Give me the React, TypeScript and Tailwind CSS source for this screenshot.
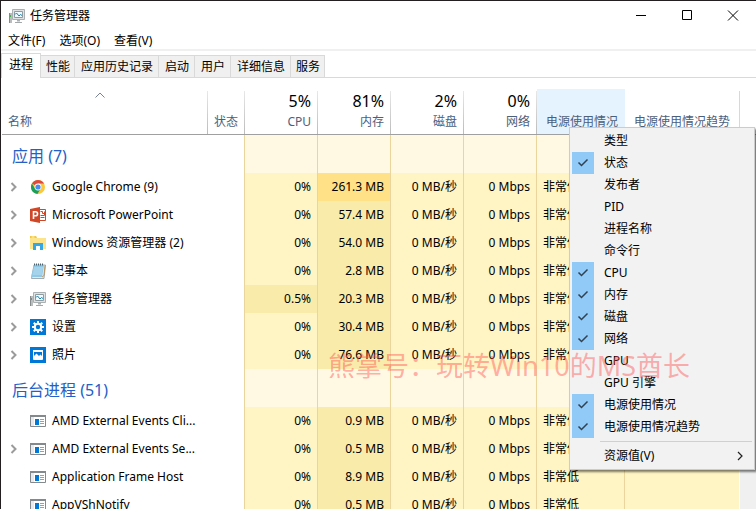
import { useState, type ReactNode } from "react";

const TaskManagerIcon = () => (
  <svg width="16" height="16" viewBox="0 0 16 16" aria-hidden="true">
    <path d="M0 5h3v10H0z" fill="#b9bdbd" />
    <path d="M0 5h1v10H0z" fill="#858b8b" />
    <path d="M1 7h1v2H1z" fill="#3fb24d" />
    <path d="M3.500 1.500h12v10h-12z" fill="#dfe3e4" stroke="#aab0b2" />
    <path d="M5.500 3.500h8v6h-8z" fill="#eefaff" stroke="#8f9a9f" />
    <path d="M6 6.500l1.500-1.500L10 8l1.500-1.500 1.500 1" fill="none" stroke="#1483b5" />
    <path d="M8 12h3v1.500H8z" fill="#aab0b1" />
    <path d="M6 14.500h7" stroke="#a3a9aa" />
  </svg>
);

const ChromeIcon = () => (
  <svg width="16" height="16" viewBox="0 0 16 16" aria-hidden="true">
    <circle cx="8" cy="8" r="7" fill="#fbc93b" />
    <path d="M8 8L1.900 4.500A7 7 0 0 1 14.100 4.600H8z" fill="#dd4b3e" />
    <path d="M1.900 4.500A7 7 0 0 0 7.400 15L10.800 9.600 8 8 5 9.600z" fill="#1b9e5a" />
    <circle cx="8" cy="8" r="3.400" fill="#fff" />
    <circle cx="8" cy="8" r="2.600" fill="#4a8af0" />
  </svg>
);

const PowerPointIcon = () => (
  <svg width="16" height="16" viewBox="0 0 16 16" aria-hidden="true">
    <path d="M9 2.500h6.500v11H9z" fill="#fff" stroke="#d04727" />
    <path d="M10.500 4.500h2v2h2M14.500 4.500v4h-4M10.500 10.500h4" fill="none" stroke="#d04727" />
    <path d="M0 2l10-2v16L0 14z" fill="#d04727" />
    <path d="M3.500 12V4.700h2a2 2 0 0 1 0 4.100h-2" fill="none" stroke="#fff" strokeWidth="1.600" />
  </svg>
);

const ExplorerIcon = () => (
  <svg width="16" height="16" viewBox="0 0 16 16" aria-hidden="true">
    <path d="M0 1h6l1 2h9v11H0z" fill="#fbe48c" />
    <path d="M0 1h6l1 2H0z" fill="#f4c83c" />
    <path d="M1.500 2h3" stroke="#fff5c8" />
    <path d="M3 8h10v7h-3v-4H6v4H3z" fill="#35a7e4" />
    <path d="M6 11h4v4H6z" fill="#fff" />
  </svg>
);

const NotepadIcon = () => (
  <svg width="16" height="16" viewBox="0 0 16 16" aria-hidden="true">
    <path d="M4 2h11.500l-1.500 13.500H1.500z" fill="#dfe9ee" stroke="#8d9ba3" strokeWidth=".8" />
    <path d="M4 2h10l-2 12H1z" fill="#8fc9e6" />
    <path d="M4 5h9M3.500 7h9M3.200 9h9M2.800 11h9" stroke="#c5e5f5" strokeWidth=".8" />
    <path d="M12 14l2-1.500 1-10" fill="none" stroke="#b58b4e" strokeWidth=".8" />
    <path d="M4.500.5v2M6.500.5v2M8.500.5v2M10.500.5v2M12.500.5v2" stroke="#4d6470" />
  </svg>
);

const SettingsIcon = () => (
  <svg width="16" height="16" viewBox="0 0 16 16" aria-hidden="true">
    <path d="M0 0h16v16H0z" fill="#0078d7" />
    <path
      d="M8 2v12M2 8h12M3.750 3.750l8.500 8.500M12.250 3.750l-8.500 8.500"
      stroke="#fff"
      strokeWidth="2"
    />
    <circle cx="8" cy="8" r="3.200" fill="#0078d7" stroke="#fff" strokeWidth="2" />
  </svg>
);

const PhotosIcon = () => (
  <svg width="16" height="16" viewBox="0 0 16 16" aria-hidden="true">
    <path d="M0 0h16v16H0z" fill="#0078d7" />
    <path d="M3.500 3.500h9v9h-9z" fill="none" stroke="#fff" />
    <path d="M3 3h10v2H3z" fill="#fff" />
    <path d="M4 12V9l2.500-2.500L9 9l1.500-1.500L12 9v3z" fill="#fff" />
  </svg>
);

const GenericIcon = () => (
  <svg width="16" height="16" viewBox="0 0 16 16" aria-hidden="true">
    <path d="M.5 2.500h15v11H.5z" fill="#fff" stroke="#84898d" />
    <path d="M0 2h16v2H0z" fill="#84898d" />
    <path d="M1 4h3v9H1z" fill="#e8eaeb" />
    <path d="M5 6h4v6H5z" fill="#0078d7" />
    <path d="M10 6.500h4M10 8.500h4M10 10.500h4" stroke="#9a9fa3" />
  </svg>
);

type Process = {
  name: string;
  icon: () => ReactNode;
  memory: string;
  cpu?: string;
  expandable?: boolean;
  heavy?: boolean;
};

const groups: { title: string; rows: Process[] }[] = [
  {
    title: "应用 (7)",
    rows: [
      { name: "Google Chrome (9)", icon: ChromeIcon, memory: "261.3 MB", expandable: true, heavy: true },
      { name: "Microsoft PowerPoint", icon: PowerPointIcon, memory: "57.4 MB", expandable: true },
      { name: "Windows 资源管理器 (2)", icon: ExplorerIcon, memory: "54.0 MB", expandable: true },
      { name: "记事本", icon: NotepadIcon, memory: "2.8 MB", expandable: true },
      { name: "任务管理器", icon: TaskManagerIcon, memory: "20.3 MB", cpu: "0.5%", expandable: true },
      { name: "设置", icon: SettingsIcon, memory: "30.4 MB", expandable: true },
      { name: "照片", icon: PhotosIcon, memory: "76.6 MB", expandable: true },
    ],
  },
  {
    title: "后台进程 (51)",
    rows: [
      { name: "AMD External Events Cli...", icon: GenericIcon, memory: "0.9 MB" },
      { name: "AMD External Events Se...", icon: GenericIcon, memory: "0.5 MB", expandable: true },
      { name: "Application Frame Host", icon: GenericIcon, memory: "8.9 MB" },
      { name: "AppVShNotify", icon: GenericIcon, memory: "0.5 MB" },
    ],
  },
];

const tabs = [
  { label: "性能", pad: "pl-[5px] pr-1" },
  { label: "应用历史记录", pad: "pl-1.5 pr-[5px]" },
  { label: "启动", pad: "pl-1.5 pr-[5px]" },
  { label: "用户", pad: "pl-1.5 pr-[5px]" },
  { label: "详细信息", pad: "pl-1.5 pr-[5px]" },
  { label: "服务", pad: "pl-[5px] pr-1" },
];

const columnOptions: [string, boolean][] = [
  ["类型", false],
  ["状态", true],
  ["发布者", false],
  ["PID", false],
  ["进程名称", false],
  ["命令行", false],
  ["CPU", true],
  ["内存", true],
  ["磁盘", true],
  ["网络", true],
  ["GPU", false],
  ["GPU 引擎", false],
  ["电源使用情况", true],
  ["电源使用情况趋势", true],
];

function Header({ label, total, line = true }: { label: string; total?: string; line?: boolean }) {
  return (
    <div className="flex h-[43px] items-stretch">
      <div className="flex flex-1 flex-col items-end justify-end pr-1.5 pb-0.5">
        {total && <span className="text-base leading-[22px] text-black">{total}</span>}
        <span className="leading-5">{label}</span>
      </div>
      <span className={line ? "w-px bg-linear-to-b from-[#e8e8e8] to-[#bcbcbc]" : "w-px"} />
    </div>
  );
}

function TitleBar() {
  return (
    <header className="flex h-[30px] items-center pl-2">
      <TaskManagerIcon />
      <h1 className="flex-1 pl-[5px]">任务管理器</h1>
      <button type="button" aria-label="最小化" className="grid h-full w-[46px] place-items-center">
        <svg width="12" height="12" viewBox="0 0 12 12" stroke="#000"><path d="M1 5.500h10" /></svg>
      </button>
      <button type="button" aria-label="最大化" className="grid h-full w-[46px] place-items-center">
        <svg width="12" height="12" viewBox="0 0 12 12" stroke="#000" fill="none"><path d="M1.500.5h9v9h-9z" /></svg>
      </button>
      <button type="button" aria-label="关闭" className="grid h-full w-[46px] place-items-center">
        <svg width="12" height="12" viewBox="0 0 12 12" stroke="#000"><path d="M1 .5l10 10M11 .5l-10 10" /></svg>
      </button>
    </header>
  );
}

function ProcessRow({ row }: { row: Process }) {
  const Icon = row.icon;
  const cell = "border-r border-[#ead69c] bg-[#fff4c4] pr-1.5 text-right whitespace-nowrap";
  return (
    <tr className="h-7">
      <td>
        <div className="flex h-7 items-center pl-2">
          <span className="w-5">
            {row.expandable && (
              <button type="button" aria-label="展开" className="block">
                <svg width="8" height="10" viewBox="0 0 8 10" fill="none" stroke="#9b9b9b" strokeWidth="2">
                  <path d="M1.500 1l4 4-4 4" />
                </svg>
              </button>
            )}
          </span>
          <Icon />
          <span className="pl-1.5 whitespace-nowrap">{row.name}</span>
        </div>
      </td>
      <td className="border-r border-[#ead69c]" />
      <td className={row.cpu ? "border-r border-[#ead69c] bg-[#f9ecaa] pr-1.5 text-right" : cell}>{row.cpu ?? "0%"}</td>
      <td
        className={
          row.heavy
            ? "border-r border-[#ead69c] bg-[#ffe187] pr-1.5 text-right whitespace-nowrap"
            : "border-r border-[#ead69c] bg-[#f9ecaa] pr-1.5 text-right whitespace-nowrap"
        }
      >
        {row.memory}
      </td>
      <td className={cell}>0 MB/秒</td>
      <td className={cell}>0 Mbps</td>
      <td className="border-r border-[#ead69c] bg-[#fff4c4] pl-1.5 whitespace-nowrap">非常低</td>
      <td className="border-r border-white bg-[#fff4c4]" />
      <td className="bg-[#f0f0f0]" />
    </tr>
  );
}

function GroupRow({ title }: { title: string }) {
  const cell = "border-r border-[#ead69c] bg-[#fff9e4]";
  return (
    <tr className="h-[38px]">
      <th scope="rowgroup" className="pt-1 pl-2.5 text-left text-base font-normal whitespace-nowrap text-[#2560c8]">
        {title}
      </th>
      <td className="border-r border-[#ead69c]" />
      <td className={cell} />
      <td className={cell} />
      <td className={cell} />
      <td className={cell} />
      <td className={cell} />
      <td className="border-r border-white bg-[#fff9e4]" />
      <td className="bg-[#f0f0f0]" />
    </tr>
  );
}

function ProcessTable() {
  const th = "border-b border-[#a0a0a0] p-0 align-bottom font-normal";
  return (
    <table className="w-full table-fixed border-separate border-spacing-0">
      <colgroup>
        <col className="w-[206px]" />
        <col className="w-[37px]" />
        <col className="w-[73px]" />
        <col className="w-[73px]" />
        <col className="w-[73px]" />
        <col className="w-[73px]" />
        <col className="w-[88px]" />
        <col />
        <col className="w-4" />
      </colgroup>
      <thead className="text-[#4c607a]">
        <tr className="h-[46px]">
          <th className={th}>
            <div className="flex h-[43px]">
              <div className="flex flex-1 flex-col items-start justify-between pr-4 pb-0.5 pl-1.5">
                <svg className="self-center" width="10" height="8" viewBox="0 0 10 8" fill="none" stroke="#77809c">
                  <path d="M.5 6.500L5 2l4.500 4.500" />
                </svg>
                <span className="leading-5">名称</span>
              </div>
              <span className="w-px bg-linear-to-b from-[#e8e8e8] to-[#bcbcbc]" />
            </div>
          </th>
          <th className={th}><Header label="状态" /></th>
          <th className={th}><Header total="5%" label="CPU" /></th>
          <th className={th}><Header total="81%" label="内存" /></th>
          <th className={th}><Header total="2%" label="磁盘" /></th>
          <th className={th}><Header total="0%" label="网络" /></th>
          <th className="border-b border-[#a0a0a0] bg-[#e5f3ff] p-0 align-bottom font-normal">
            <Header label="电源使用情况" line={false} />
          </th>
          <th className={th}>
            <div className="flex h-[43px]">
              <div className="flex flex-1 items-end justify-center pb-0.5">
                <span className="leading-5 whitespace-nowrap">电源使用情况趋势</span>
              </div>
              <span className="w-px bg-[#d8d8d8]" />
            </div>
          </th>
          <th className={th} />
        </tr>
      </thead>
      {groups.map((group) => (
        <tbody key={group.title}>
          <GroupRow title={group.title} />
          {group.rows.map((row) => (
            <ProcessRow key={row.name} row={row} />
          ))}
        </tbody>
      ))}
    </table>
  );
}

function ColumnOption({ label, initial }: { label: string; initial: boolean }) {
  const [checked, setChecked] = useState(initial);
  return (
    <label className="flex h-[22px] items-center">
      <span className="grid">
        <input
          type="checkbox"
          checked={checked}
          onChange={() => setChecked(!checked)}
          className="col-start-1 row-start-1 size-[22px] appearance-none checked:bg-[#91c9f7]"
        />
        {checked && (
          <svg
            className="pointer-events-none col-start-1 row-start-1 place-self-center"
            width="12"
            height="12"
            viewBox="0 0 12 12"
            fill="none"
            stroke="#2e4254"
            strokeWidth="1.500"
          >
            <path d="M1.500 5.500l3 3 6-6" />
          </svg>
        )}
      </span>
      <span className="pl-2.5">{label}</span>
    </label>
  );
}

function ColumnMenu() {
  return (
    <div className="absolute top-[126px] right-px w-[186px] border border-[#ccc] bg-[#f2f2f2] p-0.5 shadow-[2px_2px_2px_rgba(0,0,0,0.5)]">
      {columnOptions.map(([label, initial]) => (
        <ColumnOption key={label} label={label} initial={initial} />
      ))}
      <hr className="my-[3px] ml-7 border-t border-[#d0d0d0]" />
      <button type="button" className="flex h-[22px] w-full items-center justify-between pr-2 pl-8">
        资源值(V)
        <svg width="8" height="10" viewBox="0 0 8 10" fill="none" stroke="#222" strokeWidth="1.200">
          <path d="M2 1l4 4-4 4" />
        </svg>
      </button>
    </div>
  );
}

export default function App() {
  return (
    <div className="relative flex h-screen flex-col overflow-hidden border-t border-l border-[#231f20] bg-white font-['Noto_Sans','Noto_Sans_CJK_SC',sans-serif] text-xs text-black">
      <TitleBar />
      <nav className="flex h-5 shrink-0 items-center gap-[14px] border-b-2 border-[#f0f0f0] pt-0.5 pl-[7px]">
        <button type="button">文件(F)</button>
        <button type="button">选项(O)</button>
        <button type="button">查看(V)</button>
      </nav>
      <div role="tablist" className="flex h-[27px] shrink-0 items-end border-b border-[#d9d9d9]">
        <button
          type="button"
          role="tab"
          aria-selected="true"
          className="-mb-px h-[25px] w-10 border border-b-0 border-[#d9d9d9] bg-white pb-0.5"
        >
          进程
        </button>
        {tabs.map((tab) => (
          <button
            key={tab.label}
            type="button"
            role="tab"
            aria-selected="false"
            className={`h-[22px] border-t border-r border-[#d9d9d9] bg-[#f0f0f0] ${tab.pad}`}
          >
            {tab.label}
          </button>
        ))}
      </div>
      <main className="min-h-0 flex-1 overflow-hidden pt-[11px] pl-px">
        <ProcessTable />
      </main>
      <ColumnMenu />
      <p className="pointer-events-none absolute top-[345px] left-[327px] text-[27px] leading-10 whitespace-nowrap text-[#ff5050]/45">
        熊掌号：玩转Win10的MS酋长
      </p>
    </div>
  );
}
